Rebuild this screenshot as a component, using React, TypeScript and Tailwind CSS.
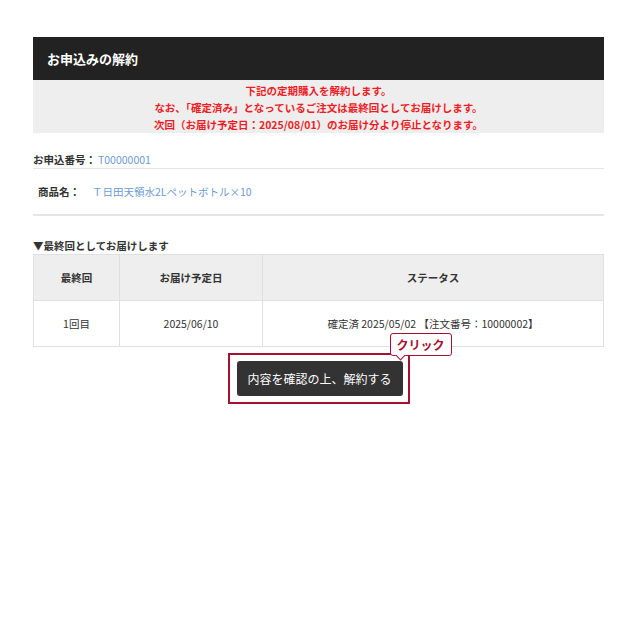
export default function App() {
  const font = { fontFamily: '"Noto Sans CJK JP", "Noto Sans", sans-serif' }
  return (
    <div className="min-h-[640px] w-[640px] bg-white text-[#333]" style={font}>
      <div className="ml-[33px] mr-[36px] pt-[37px]">
        <div className="flex h-[43px] items-center bg-[#222] px-[14px]">
          <h2 className="text-[13px] font-bold text-white">お申込みの解約</h2>
        </div>
        <div className="bg-[#eee] pt-[2px] text-center text-[10.5px] font-bold leading-[17px] text-[#ee1c25]">
          <p>下記の定期購入を解約します。</p>
          <p>なお、「確定済み」となっているご注文は最終回としてお届けします。</p>
          <p>次回（お届け予定日：2025/08/01）のお届け分より停止となります。</p>
        </div>

        <div className="mt-[19px] flex items-center gap-[2px] border-b border-[#e5e5e5] text-[10.5px] leading-[16px]">
          <span className="font-bold">お申込番号：</span>
          <span className="text-[#6b9bd1]">T00000001</span>
        </div>
        <div className="flex items-center border-b-2 border-[#e5e5e5] pb-[14px] pl-[5px] pt-[15px] text-[10.5px] leading-[16px]">
          <span className="w-[54px] font-bold">商品名：</span>
          <span className="text-[#6b9bd1]">Ｔ日田天領水2Lペットボトル×10</span>
        </div>

        <p className="mt-[22px] text-[10.5px] font-bold leading-[16px]">▼最終回としてお届けします</p>
        <table className="w-full border-collapse text-center text-[10.5px]">
          <thead>
            <tr className="h-[46px] bg-[#eee] font-bold">
              <th className="w-[86px] border border-[#e0e0e0]">最終回</th>
              <th className="w-[143px] border border-[#e0e0e0]">お届け予定日</th>
              <th className="border border-[#e0e0e0]">ステータス</th>
            </tr>
          </thead>
          <tbody>
            <tr className="h-[46px]">
              <td className="border border-[#e0e0e0]">1回目</td>
              <td className="border border-[#e0e0e0]">2025/06/10</td>
              <td className="border border-[#e0e0e0]">確定済 2025/05/02 【注文番号：10000002】</td>
            </tr>
          </tbody>
        </table>

        <div className="mt-[6px] flex justify-center">
          <div className="relative border-2 border-[#a6112f] py-[6px] pl-[7px] pr-[5px]">
            <button className="h-[35px] w-[166px] whitespace-nowrap rounded-[3px] bg-[#333] text-[12px] text-white">
              内容を確認の上、解約する
            </button>
            <div className="absolute left-[160px] top-[-22px] whitespace-nowrap rounded-[3px] border border-[#a6112f] bg-white px-[6px] text-[12px] font-bold leading-[21px] text-[#a6112f]">
              <span className="absolute bottom-[-4px] left-[6px] h-[7px] w-[7px] rotate-45 border-b border-r border-[#a6112f] bg-white" />
              <span className="relative">クリック</span>
            </div>
          </div>
        </div>
      </div>
    </div>
  )
}
